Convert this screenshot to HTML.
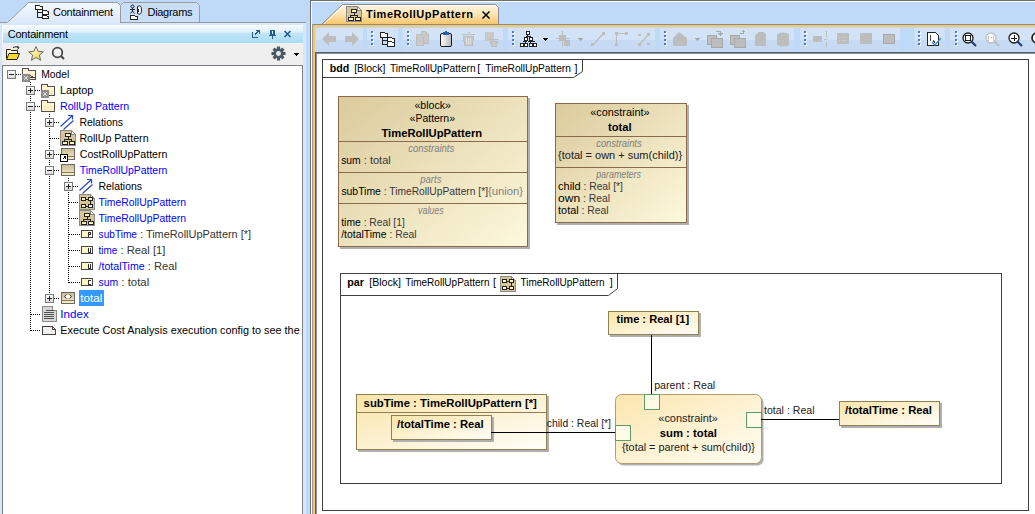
<!DOCTYPE html><html><head><meta charset="utf-8"><style>
html,body{margin:0;padding:0;width:1035px;height:514px;overflow:hidden;background:#bfdaf9}
svg{display:block}
text{font-family:"Liberation Sans",sans-serif;font-size:11px;white-space:pre}
</style></head><body>
<svg width="1035" height="514" viewBox="0 0 1035 514" shape-rendering="crispEdges">
<defs>
<linearGradient id="gTabC" x1="0" y1="0" x2="0" y2="1"><stop offset="0" stop-color="#f4f8fe"/><stop offset="1" stop-color="#dce9fa"/></linearGradient>
<linearGradient id="gTitle" x1="0" y1="0" x2="0" y2="1"><stop offset="0" stop-color="#f2f9fe"/><stop offset="0.36" stop-color="#dff1fb"/><stop offset="0.42" stop-color="#c2e5f7"/><stop offset="1" stop-color="#a9dbf3"/></linearGradient>
<linearGradient id="gTabE" x1="0" y1="0" x2="0" y2="1"><stop offset="0" stop-color="#fef6e4"/><stop offset="0.45" stop-color="#fde6b8"/><stop offset="1" stop-color="#f8c468"/></linearGradient>
<linearGradient id="gTb" x1="0" y1="0" x2="0" y2="1"><stop offset="0" stop-color="#d5e4f8"/><stop offset="0.5" stop-color="#cfdff6"/><stop offset="0.52" stop-color="#c3d7f2"/><stop offset="1" stop-color="#c6daf4"/></linearGradient>
<linearGradient id="gBlock" x1="0" y1="0" x2="1" y2="1"><stop offset="0" stop-color="#dbca9c"/><stop offset="1" stop-color="#fdf9dc"/></linearGradient>
<linearGradient id="gPart" x1="0" y1="0" x2="1" y2="1"><stop offset="0" stop-color="#f9e4a8"/><stop offset="1" stop-color="#fffefa"/></linearGradient>
<linearGradient id="gCons" x1="0" y1="0" x2="1" y2="1"><stop offset="0" stop-color="#fce6ae"/><stop offset="1" stop-color="#fffdf4"/></linearGradient>
<linearGradient id="gExp" x1="0" y1="0" x2="0" y2="1"><stop offset="0" stop-color="#ffffff"/><stop offset="1" stop-color="#d8d8d8"/></linearGradient>
<linearGradient id="gBlk" x1="0" y1="0" x2="0" y2="1"><stop offset="0" stop-color="#c8b890"/><stop offset="1" stop-color="#f8eed0"/></linearGradient>
<linearGradient id="gClip" x1="0" y1="0" x2="1" y2="0"><stop offset="0" stop-color="#ffffff"/><stop offset="1" stop-color="#b8b8b8"/></linearGradient>
<linearGradient id="gStar" x1="0" y1="0" x2="1" y2="1"><stop offset="0" stop-color="#fdfdd8"/><stop offset="0.6" stop-color="#f2e488"/><stop offset="1" stop-color="#e8c440"/></linearGradient>
</defs>

<path d="M7.5 22.5 L28.5 2.5 L117.5 2.5 L120.5 5.5 L120.5 22.5" fill="url(#gTabC)" stroke="#9a9a9a" shape-rendering="auto"/>
<path d="M120.5 22.5 L120.5 5.5 L123.5 2.5 L196.5 2.5 L199.5 5.5 L199.5 22.5" fill="#c9def9" stroke="#9a9a9a" shape-rendering="auto"/>
<line x1="0" y1="22.5" x2="7" y2="22.5" stroke="#9a9a9a"/>
<line x1="120" y1="22.5" x2="306" y2="22.5" stroke="#9a9a9a"/>
<rect x="0" y="23" width="306" height="491" fill="#d6e6fb"/>
<rect x="8" y="22" width="112" height="1" fill="#dce9fa"/>
<text x="53" y="15.5" fill="#000" textLength="60" lengthAdjust="spacing">Containment</text>
<text x="147.5" y="15.5" fill="#000" textLength="45" lengthAdjust="spacing">Diagrams</text>
<rect x="2" y="25" width="301" height="18" fill="#ffffff"/>
<rect x="3" y="26" width="300" height="17" fill="url(#gTitle)"/>
<text x="7.7" y="37.5" fill="#000" textLength="60.4" lengthAdjust="spacing">Containment</text>
<rect x="2" y="43" width="301" height="22" fill="#efefef"/>
<rect x="2" y="65" width="300" height="449" fill="#ffffff"/>
<path d="M6.5 49.5 H10.5 L11.5 50.5 H17.5 V58.5 H6.5 Z" fill="#fdf6c8" stroke="#222" shape-rendering="auto"/>
<path d="M6.5 59.5 L9 53.5 H19.5 L17 59.5 Z" fill="#f6dc2a" stroke="#222" shape-rendering="auto"/>
<path d="M13 47.5 Q16 46 18.5 47.5 M17 46 L19 47.5 L17.5 49.5" fill="none" stroke="#222" stroke-width="1" shape-rendering="auto"/>
<path d="M36 46.5 L38.2 51.3 L43.3 51.8 L39.4 55.1 L40.6 60.2 L36 57.5 L31.4 60.2 L32.6 55.1 L28.7 51.8 L33.8 51.3 Z" fill="url(#gStar)" stroke="#6c6c60" stroke-width="1" shape-rendering="auto"/>
<circle cx="57.5" cy="52.5" r="4.8" fill="none" stroke="#4a4a4a" stroke-width="1.8" shape-rendering="auto"/>
<path d="M61 56 L64 59" stroke="#4a4a4a" stroke-width="2.2" shape-rendering="auto"/>
<g transform="translate(278.5 53.5)" shape-rendering="auto"><rect x="-1.6" y="-7" width="3.2" height="4" fill="#4c5966" transform="rotate(0)"/><rect x="-1.6" y="-7" width="3.2" height="4" fill="#4c5966" transform="rotate(45)"/><rect x="-1.6" y="-7" width="3.2" height="4" fill="#4c5966" transform="rotate(90)"/><rect x="-1.6" y="-7" width="3.2" height="4" fill="#4c5966" transform="rotate(135)"/><rect x="-1.6" y="-7" width="3.2" height="4" fill="#4c5966" transform="rotate(180)"/><rect x="-1.6" y="-7" width="3.2" height="4" fill="#4c5966" transform="rotate(225)"/><rect x="-1.6" y="-7" width="3.2" height="4" fill="#4c5966" transform="rotate(270)"/><rect x="-1.6" y="-7" width="3.2" height="4" fill="#4c5966" transform="rotate(315)"/><circle r="5" fill="#4c5966"/><circle r="2.4" fill="#efefef"/></g>
<path d="M294 53 H299 L296.5 56 Z" fill="#000"/>
<path d="M252.5 32 V37.5 H258 M255 34.5 L259 30.5 M256 30.5 H259.5 V34" fill="none" stroke="#2a5a90" stroke-width="1.2"/>
<path d="M270 30.5 H275 M271 31 V35 H274 V31 M269 35.5 H276 M272.5 36 V38.5" fill="none" stroke="#2a5a90" stroke-width="1.2"/>
<path d="M284.5 31 L290.5 37 M290.5 31 L284.5 37" stroke="#2a5a90" stroke-width="1.6" shape-rendering="auto"/>
<path d="M35.5 5.5 H39.5 L40.5 6.5 H42.5 V9.5 H35.5 Z M42.5 10.5 H46.5 L47.5 11.5 H48.5 V14.5 H42.5 Z M42.5 15.5 H46.5 L47.5 16.5 H48.5 V18.5 H42.5 Z" fill="#fff" stroke="#222"/>
<path d="M37.5 10 V17.5 H42 M37.5 12.5 H42" fill="none" stroke="#222"/>
<circle cx="132.5" cy="6.5" r="1.5" fill="none" stroke="#222" shape-rendering="auto"/>
<path d="M132.5 8 V11 M130 9.5 H135 M130.5 13.5 L132.5 11 L134.5 13.5" fill="none" stroke="#222" shape-rendering="auto"/>
<path d="M137.5 6.5 Q141.5 4 141.5 10 Q141.5 16 137.5 13.5 Z" fill="#fff" stroke="#222" shape-rendering="auto"/>
<path d="M130.5 15.5 H134.5 L135.5 16.5 H137.5 V19.5 H130.5 Z" fill="#fff" stroke="#222"/>
<path d="M138.5 8.5 V11.5" stroke="#222"/>
<path d="M2.5 514 V65.5 H302.5 V514" fill="none" stroke="#7c7f86"/>
<rect x="7.5" y="70.5" width="8" height="8" fill="url(#gExp)" stroke="#7b7b7b"/>
<line x1="9" y1="74.5" x2="14" y2="74.5" stroke="#222"/>
<line x1="16" y1="74.5" x2="22" y2="74.5" stroke="#000" stroke-dasharray="1,1"/>
<path d="M22.5 79.5 V70.5 H35.5 V79.5 Z" fill="#fcf0c4" stroke="#505050"/>
<path d="M22.5 70.5 V68.5 H28.5 V70.5" fill="#fcf0c4" stroke="#505050"/>
<rect x="23" y="71" width="12" height="2" fill="#fff8e0"/>
<path d="M28 74 L33 77 H28" fill="none" stroke="#404040"/>
<rect x="22" y="74" width="8" height="8" fill="#8c8c8c"/>
<path d="M24 76 L28 80 M28 76 L24 80" stroke="#e8e8e8" shape-rendering="auto"/>
<text x="41.2" y="78" fill="#000" textLength="28" lengthAdjust="spacingAndGlyphs" >Model</text>
<line x1="30.5" y1="82" x2="30.5" y2="331" stroke="#000" stroke-dasharray="1,1"/>
<rect x="26.5" y="86.5" width="8" height="8" fill="url(#gExp)" stroke="#7b7b7b"/>
<line x1="28" y1="90.5" x2="33" y2="90.5" stroke="#222"/>
<line x1="30.5" y1="88" x2="30.5" y2="93" stroke="#222"/>
<line x1="35" y1="90.5" x2="41" y2="90.5" stroke="#000" stroke-dasharray="1,1"/>
<path d="M41.5 95.5 V86.5 H54.5 V95.5 Z" fill="#fcf0c4" stroke="#505050"/>
<path d="M41.5 86.5 V84.5 H47.5 V86.5" fill="#fcf0c4" stroke="#505050"/>
<rect x="42" y="87" width="12" height="2" fill="#fff8e0"/>
<rect x="41" y="90" width="8" height="8" fill="#8c8c8c"/>
<path d="M43 92 L47 96 M47 92 L43 96" stroke="#e8e8e8" shape-rendering="auto"/>
<text x="60" y="94" fill="#000" textLength="33.4" lengthAdjust="spacingAndGlyphs" >Laptop</text>
<rect x="26.5" y="102.5" width="8" height="8" fill="url(#gExp)" stroke="#7b7b7b"/>
<line x1="28" y1="106.5" x2="33" y2="106.5" stroke="#222"/>
<line x1="35" y1="106.5" x2="41" y2="106.5" stroke="#000" stroke-dasharray="1,1"/>
<path d="M41.5 111.5 V102.5 H54.5 V111.5 Z" fill="#fcf0c4" stroke="#505050"/>
<path d="M41.5 102.5 V100.5 H47.5 V102.5" fill="#fcf0c4" stroke="#505050"/>
<rect x="42" y="103" width="12" height="2" fill="#fff8e0"/>
<text x="60" y="110" fill="#0000ff" textLength="69.2" lengthAdjust="spacingAndGlyphs" >RollUp Pattern</text>
<line x1="49.5" y1="114" x2="49.5" y2="299" stroke="#000" stroke-dasharray="1,1"/>
<rect x="45.5" y="118.5" width="8" height="8" fill="url(#gExp)" stroke="#7b7b7b"/>
<line x1="47" y1="122.5" x2="52" y2="122.5" stroke="#222"/>
<line x1="49.5" y1="120" x2="49.5" y2="125" stroke="#222"/>
<line x1="54" y1="122.5" x2="60" y2="122.5" stroke="#000" stroke-dasharray="1,1"/>
<path d="M60.5 126.5 L72.5 115.5 M68 115.5 H72.5 V119.5 M63.5 129.5 L73.5 120.5" fill="none" stroke="#2848c8" stroke-width="1.2" shape-rendering="auto"/>
<text x="79.4" y="126" fill="#000" textLength="43.6" lengthAdjust="spacingAndGlyphs" >Relations</text>
<line x1="50" y1="138.5" x2="60" y2="138.5" stroke="#000" stroke-dasharray="1,1"/>
<path d="M60.5 130.5 H71.5 L75.5 134.5 V145.5 H60.5 Z" fill="#d6c597" stroke="#8a8a8a"/>
<path d="M71.5 130.5 V134.5 H75.5 Z" fill="#ffffff" stroke="#8a8a8a"/>
<rect x="65.5" y="133.5" width="5" height="3" fill="#fff6c8" stroke="#222"/>
<path d="M68 137 V139.5 H64.5 V141 M68 139.5 H71.5 V141" fill="none" stroke="#222"/>
<rect x="62.5" y="141.5" width="5" height="3" fill="#fff6c8" stroke="#222"/>
<rect x="69.5" y="141.5" width="5" height="3" fill="#fff6c8" stroke="#222"/>
<text x="79.4" y="142" fill="#000" textLength="69.2" lengthAdjust="spacingAndGlyphs" >RollUp Pattern</text>
<rect x="45.5" y="150.5" width="8" height="8" fill="url(#gExp)" stroke="#7b7b7b"/>
<line x1="47" y1="154.5" x2="52" y2="154.5" stroke="#222"/>
<line x1="49.5" y1="152" x2="49.5" y2="157" stroke="#222"/>
<line x1="54" y1="154.5" x2="60" y2="154.5" stroke="#000" stroke-dasharray="1,1"/>
<rect x="61.5" y="148.5" width="13" height="11" fill="url(#gBlk)" stroke="#6a6a6a"/>
<line x1="62" y1="156.5" x2="74" y2="156.5" stroke="#8c7c58"/>
<rect x="62" y="157" width="12" height="2" fill="#f4e8c0"/>
<rect x="60.5" y="154.5" width="7" height="7" fill="#fff" stroke="#000"/>
<path d="M62.5 159.5 L65.5 156.5 M63.5 156.5 H65.5 V158.5" stroke="#000" fill="none"/>
<text x="79.8" y="158" fill="#000" textLength="87.6" lengthAdjust="spacingAndGlyphs" >CostRollUpPattern</text>
<rect x="45.5" y="166.5" width="8" height="8" fill="url(#gExp)" stroke="#7b7b7b"/>
<line x1="47" y1="170.5" x2="52" y2="170.5" stroke="#222"/>
<line x1="54" y1="170.5" x2="60" y2="170.5" stroke="#000" stroke-dasharray="1,1"/>
<rect x="61.5" y="164.5" width="13" height="11" fill="url(#gBlk)" stroke="#6a6a6a"/>
<line x1="62" y1="172.5" x2="74" y2="172.5" stroke="#8c7c58"/>
<rect x="62" y="173" width="12" height="2" fill="#f4e8c0"/>
<text x="79.8" y="174" fill="#0000ff" textLength="87.6" lengthAdjust="spacingAndGlyphs" >TimeRollUpPattern</text>
<line x1="68.5" y1="178" x2="68.5" y2="283" stroke="#000" stroke-dasharray="1,1"/>
<rect x="64.5" y="182.5" width="8" height="8" fill="url(#gExp)" stroke="#7b7b7b"/>
<line x1="66" y1="186.5" x2="71" y2="186.5" stroke="#222"/>
<line x1="68.5" y1="184" x2="68.5" y2="189" stroke="#222"/>
<line x1="73" y1="186.5" x2="79" y2="186.5" stroke="#000" stroke-dasharray="1,1"/>
<path d="M79.5 190.5 L91.5 179.5 M87 179.5 H91.5 V183.5 M82.5 193.5 L92.5 184.5" fill="none" stroke="#2848c8" stroke-width="1.2" shape-rendering="auto"/>
<text x="98.5" y="190" fill="#000" textLength="43.5" lengthAdjust="spacingAndGlyphs" >Relations</text>
<line x1="69" y1="202.5" x2="79" y2="202.5" stroke="#000" stroke-dasharray="1,1"/>
<path d="M79.5 194.5 H90.5 L94.5 198.5 V209.5 H79.5 Z" fill="#d6c597" stroke="#8a8a8a"/>
<path d="M90.5 194.5 V198.5 H94.5 Z" fill="#ffffff" stroke="#8a8a8a"/>
<rect x="81.5" y="197.5" width="4" height="3" fill="#fff6c8" stroke="#222"/>
<rect x="88.5" y="197.5" width="4" height="3" fill="#fff6c8" stroke="#222"/>
<rect x="81.5" y="204.5" width="4" height="3" fill="#fff6c8" stroke="#222"/>
<rect x="88.5" y="204.5" width="4" height="3" fill="#fff6c8" stroke="#222"/>
<path d="M86 199.5 H88 M86 206.5 H88 M90.5 201 V204" stroke="#222"/>
<text x="98.5" y="206" fill="#0000ff" textLength="87.5" lengthAdjust="spacingAndGlyphs" >TimeRollUpPattern</text>
<line x1="69" y1="218.5" x2="79" y2="218.5" stroke="#000" stroke-dasharray="1,1"/>
<path d="M79.5 210.5 H90.5 L94.5 214.5 V225.5 H79.5 Z" fill="#d6c597" stroke="#8a8a8a"/>
<path d="M90.5 210.5 V214.5 H94.5 Z" fill="#ffffff" stroke="#8a8a8a"/>
<rect x="84.5" y="213.5" width="5" height="3" fill="#fff6c8" stroke="#222"/>
<path d="M87 217 V219.5 H83.5 V221 M87 219.5 H90.5 V221" fill="none" stroke="#222"/>
<rect x="81.5" y="221.5" width="5" height="3" fill="#fff6c8" stroke="#222"/>
<rect x="88.5" y="221.5" width="5" height="3" fill="#fff6c8" stroke="#222"/>
<text x="98.5" y="222" fill="#0000ff" textLength="87.5" lengthAdjust="spacingAndGlyphs" >TimeRollUpPattern</text>
<line x1="69" y1="234.5" x2="80" y2="234.5" stroke="#000" stroke-dasharray="1,1"/>
<rect x="81.5" y="230.5" width="11" height="7" fill="#fcf6c4" stroke="#454545"/>
<rect x="88" y="231" width="4" height="6" fill="#fffde8"/>
<path d="M88.5 237 V232.5 H90.5 V234.5 H89" fill="none" stroke="#333"/>
<text x="98.6" y="238" fill="#0000ff" textLength="38.4" lengthAdjust="spacingAndGlyphs" >subTime</text>
<text x="137" y="238" fill="#333333" textLength="114" lengthAdjust="spacingAndGlyphs" > : TimeRollUpPattern [*]</text>
<line x1="69" y1="250.5" x2="80" y2="250.5" stroke="#000" stroke-dasharray="1,1"/>
<rect x="81.5" y="246.5" width="11" height="7" fill="#fcf6c4" stroke="#454545"/>
<rect x="88" y="247" width="4" height="6" fill="#fffde8"/>
<path d="M88.5 248 V252.5 H90.5 V248" fill="none" stroke="#333"/>
<text x="98.6" y="254" fill="#0000ff" textLength="18.7" lengthAdjust="spacingAndGlyphs" >time</text>
<text x="117.4" y="254" fill="#333333" textLength="48" lengthAdjust="spacingAndGlyphs" > : Real [1]</text>
<line x1="69" y1="266.5" x2="80" y2="266.5" stroke="#000" stroke-dasharray="1,1"/>
<rect x="81.5" y="262.5" width="11" height="7" fill="#fcf6c4" stroke="#454545"/>
<rect x="88" y="263" width="4" height="6" fill="#fffde8"/>
<path d="M88.5 264 V268.5 H90.5 V264" fill="none" stroke="#333"/>
<text x="98.6" y="270" fill="#0000ff" textLength="46" lengthAdjust="spacingAndGlyphs" >/totalTime</text>
<text x="144.6" y="270" fill="#333333" textLength="32.4" lengthAdjust="spacingAndGlyphs" > : Real</text>
<line x1="69" y1="282.5" x2="80" y2="282.5" stroke="#000" stroke-dasharray="1,1"/>
<rect x="81.5" y="278.5" width="11" height="7" fill="#fcf6c4" stroke="#454545"/>
<rect x="88" y="279" width="4" height="6" fill="#fffde8"/>
<path d="M91 280.5 H88.5 V284.5 H91" fill="none" stroke="#333"/>
<text x="98.6" y="286" fill="#0000ff" textLength="19.6" lengthAdjust="spacingAndGlyphs" >sum</text>
<text x="118.2" y="286" fill="#333333" textLength="31" lengthAdjust="spacingAndGlyphs" > : total</text>
<rect x="45.5" y="294.5" width="8" height="8" fill="url(#gExp)" stroke="#7b7b7b"/>
<line x1="47" y1="298.5" x2="52" y2="298.5" stroke="#222"/>
<line x1="49.5" y1="296" x2="49.5" y2="301" stroke="#222"/>
<line x1="54" y1="298.5" x2="60" y2="298.5" stroke="#000" stroke-dasharray="1,1"/>
<rect x="61.5" y="292.5" width="13" height="11" fill="url(#gBlk)" stroke="#6a6a6a"/>
<line x1="62" y1="300.5" x2="74" y2="300.5" stroke="#8c7c58"/>
<rect x="62" y="301" width="12" height="2" fill="#f4e8c0"/>
<path d="M66.5 294.5 L64.5 296.5 L66.5 298.5 M69.5 294.5 L71.5 296.5 L69.5 298.5" fill="none" stroke="#333" shape-rendering="auto"/>
<rect x="66" y="295" width="4" height="3" fill="#ffffff"/>
<rect x="79" y="290" width="25" height="16" fill="#3399ff"/>
<text x="80.3" y="302" fill="#ffffff" textLength="22" lengthAdjust="spacingAndGlyphs" >total</text>
<line x1="31" y1="314.5" x2="41" y2="314.5" stroke="#000" stroke-dasharray="1,1"/>
<path d="M42.5 306.5 H52.5 L56.5 310.5 V321.5 H42.5 Z" fill="#d8d8d8" stroke="#8a8a8a"/>
<path d="M52.5 306.5 V310.5 H56.5" fill="#fff" stroke="#8a8a8a"/>
<line x1="46" y1="310.5" x2="54" y2="310.5" stroke="#505050"/>
<line x1="44" y1="312.5" x2="54" y2="312.5" stroke="#505050"/>
<line x1="44" y1="314.5" x2="54" y2="314.5" stroke="#505050"/>
<line x1="44" y1="316.5" x2="54" y2="316.5" stroke="#505050"/>
<line x1="44" y1="318.5" x2="54" y2="318.5" stroke="#505050"/>
<text x="60.3" y="318" fill="#0000ff" textLength="28.4" lengthAdjust="spacingAndGlyphs" >Index</text>
<line x1="31" y1="330.5" x2="41" y2="330.5" stroke="#000" stroke-dasharray="1,1"/>
<path d="M42.5 326.5 H52.5 L55.5 329.5 V334.5 H42.5 Z" fill="#f0f0f0" stroke="#404040"/>
<path d="M52.5 326.5 V329.5 H55.5" fill="none" stroke="#404040"/>
<text x="60.3" y="334" fill="#000" textLength="239.4" lengthAdjust="spacingAndGlyphs" >Execute Cost Analysis execution config to see the</text>
<rect x="310" y="0" width="725" height="514" fill="#bfdaf9"/>
<line x1="310.5" y1="0" x2="310.5" y2="514" stroke="#6d6d6d"/>
<line x1="310" y1="0.5" x2="1035" y2="0.5" stroke="#6d6d6d"/>
<line x1="311.5" y1="1" x2="311.5" y2="514" stroke="#ffffff"/>
<line x1="311" y1="1.5" x2="1035" y2="1.5" stroke="#ffffff"/>
<path d="M321.5 24.5 L342.5 4.5 L495.5 4.5 L498.5 7.5 L498.5 24.5" fill="url(#gTabE)" stroke="#8c8c8c" shape-rendering="auto"/>
<path d="M324 24 L343 5.5 L495 5.5" fill="none" stroke="#ffffff" stroke-opacity="0.8" shape-rendering="auto"/>
<text x="366" y="18" fill="#000" font-weight="bold" font-size="12" textLength="107" lengthAdjust="spacing">TimeRollUpPattern</text>
<path d="M346.5 6.5 H357.5 L361.5 10.5 V21.5 H346.5 Z" fill="#d6c597" stroke="#8a8a8a"/>
<path d="M357.5 6.5 V10.5 H361.5 Z" fill="#ffffff" stroke="#8a8a8a"/>
<rect x="351.5" y="9.5" width="5" height="3" fill="#fff6c8" stroke="#222"/>
<path d="M354 13 V15.5 H350.5 V17 M354 15.5 H357.5 V17" fill="none" stroke="#222"/>
<rect x="348.5" y="17.5" width="5" height="3" fill="#fff6c8" stroke="#222"/>
<rect x="355.5" y="17.5" width="5" height="3" fill="#fff6c8" stroke="#222"/>
<path d="M482.5 11.5 L489.5 18.5 M489.5 11.5 L482.5 18.5" stroke="#000" stroke-width="1.5" shape-rendering="auto"/>
<rect x="312" y="24" width="723" height="1" fill="#8a8a8a"/>
<rect x="312" y="24" width="1" height="490" fill="#9a9a9a"/>
<rect x="313" y="25" width="722" height="2" fill="#f8c868"/>
<rect x="313" y="25" width="2" height="489" fill="#f8c868"/>
<rect x="315" y="27" width="720" height="25" fill="#bfdaf9"/>
<rect x="316" y="28" width="47" height="12" fill="#d3e3f7"/>
<rect x="316" y="40" width="47" height="11" fill="#c6daf3"/>
<rect x="367" y="28" width="31" height="12" fill="#d3e3f7"/>
<rect x="367" y="40" width="31" height="11" fill="#c6daf3"/>
<rect x="403" y="28" width="100" height="12" fill="#d3e3f7"/>
<rect x="403" y="40" width="100" height="11" fill="#c6daf3"/>
<rect x="508" y="28" width="147" height="12" fill="#d3e3f7"/>
<rect x="508" y="40" width="147" height="11" fill="#c6daf3"/>
<rect x="660" y="28" width="134" height="12" fill="#d3e3f7"/>
<rect x="660" y="40" width="134" height="11" fill="#c6daf3"/>
<rect x="800" y="28" width="100" height="12" fill="#d3e3f7"/>
<rect x="800" y="40" width="100" height="11" fill="#c6daf3"/>
<rect x="914" y="28" width="31" height="12" fill="#d3e3f7"/>
<rect x="914" y="40" width="31" height="11" fill="#c6daf3"/>
<rect x="950" y="28" width="85" height="12" fill="#d3e3f7"/>
<rect x="950" y="40" width="85" height="11" fill="#c6daf3"/>
<rect x="372" y="32" width="2" height="2" fill="#ffffff"/>
<rect x="371" y="31" width="2" height="2" fill="#3f7fd6"/>
<rect x="372" y="36" width="2" height="2" fill="#ffffff"/>
<rect x="371" y="35" width="2" height="2" fill="#3f7fd6"/>
<rect x="372" y="40" width="2" height="2" fill="#ffffff"/>
<rect x="371" y="39" width="2" height="2" fill="#3f7fd6"/>
<rect x="372" y="44" width="2" height="2" fill="#ffffff"/>
<rect x="371" y="43" width="2" height="2" fill="#3f7fd6"/>
<rect x="408" y="32" width="2" height="2" fill="#ffffff"/>
<rect x="407" y="31" width="2" height="2" fill="#3f7fd6"/>
<rect x="408" y="36" width="2" height="2" fill="#ffffff"/>
<rect x="407" y="35" width="2" height="2" fill="#3f7fd6"/>
<rect x="408" y="40" width="2" height="2" fill="#ffffff"/>
<rect x="407" y="39" width="2" height="2" fill="#3f7fd6"/>
<rect x="408" y="44" width="2" height="2" fill="#ffffff"/>
<rect x="407" y="43" width="2" height="2" fill="#3f7fd6"/>
<rect x="513" y="32" width="2" height="2" fill="#ffffff"/>
<rect x="512" y="31" width="2" height="2" fill="#3f7fd6"/>
<rect x="513" y="36" width="2" height="2" fill="#ffffff"/>
<rect x="512" y="35" width="2" height="2" fill="#3f7fd6"/>
<rect x="513" y="40" width="2" height="2" fill="#ffffff"/>
<rect x="512" y="39" width="2" height="2" fill="#3f7fd6"/>
<rect x="513" y="44" width="2" height="2" fill="#ffffff"/>
<rect x="512" y="43" width="2" height="2" fill="#3f7fd6"/>
<rect x="665" y="32" width="2" height="2" fill="#ffffff"/>
<rect x="664" y="31" width="2" height="2" fill="#3f7fd6"/>
<rect x="665" y="36" width="2" height="2" fill="#ffffff"/>
<rect x="664" y="35" width="2" height="2" fill="#3f7fd6"/>
<rect x="665" y="40" width="2" height="2" fill="#ffffff"/>
<rect x="664" y="39" width="2" height="2" fill="#3f7fd6"/>
<rect x="665" y="44" width="2" height="2" fill="#ffffff"/>
<rect x="664" y="43" width="2" height="2" fill="#3f7fd6"/>
<rect x="805" y="32" width="2" height="2" fill="#ffffff"/>
<rect x="804" y="31" width="2" height="2" fill="#3f7fd6"/>
<rect x="805" y="36" width="2" height="2" fill="#ffffff"/>
<rect x="804" y="35" width="2" height="2" fill="#3f7fd6"/>
<rect x="805" y="40" width="2" height="2" fill="#ffffff"/>
<rect x="804" y="39" width="2" height="2" fill="#3f7fd6"/>
<rect x="805" y="44" width="2" height="2" fill="#ffffff"/>
<rect x="804" y="43" width="2" height="2" fill="#3f7fd6"/>
<rect x="919" y="32" width="2" height="2" fill="#ffffff"/>
<rect x="918" y="31" width="2" height="2" fill="#3f7fd6"/>
<rect x="919" y="36" width="2" height="2" fill="#ffffff"/>
<rect x="918" y="35" width="2" height="2" fill="#3f7fd6"/>
<rect x="919" y="40" width="2" height="2" fill="#ffffff"/>
<rect x="918" y="39" width="2" height="2" fill="#3f7fd6"/>
<rect x="919" y="44" width="2" height="2" fill="#ffffff"/>
<rect x="918" y="43" width="2" height="2" fill="#3f7fd6"/>
<rect x="956" y="32" width="2" height="2" fill="#ffffff"/>
<rect x="955" y="31" width="2" height="2" fill="#3f7fd6"/>
<rect x="956" y="36" width="2" height="2" fill="#ffffff"/>
<rect x="955" y="35" width="2" height="2" fill="#3f7fd6"/>
<rect x="956" y="40" width="2" height="2" fill="#ffffff"/>
<rect x="955" y="39" width="2" height="2" fill="#3f7fd6"/>
<rect x="956" y="44" width="2" height="2" fill="#ffffff"/>
<rect x="955" y="43" width="2" height="2" fill="#3f7fd6"/>
<path d="M322 39 L329 32 L329 36 L336 36 L336 42 L329 42 L329 46 Z" fill="#bdbdbd" shape-rendering="auto"/>
<path d="M359 39 L352 32 L352 36 L345 36 L345 42 L352 42 L352 46 Z" fill="#bdbdbd" shape-rendering="auto"/>
<path d="M382.5 37 V44.5 H387 M382.5 40.5 H387" fill="none" stroke="#222"/>
<path d="M380.5 37.5 V32.5 H384.5 L385.5 33.5 H387.5 V37.5 Z" fill="#fff" stroke="#222"/>
<path d="M387.5 42.5 V37.5 H391.5 L392.5 38.5 H394.5 V42.5 Z" fill="#fff" stroke="#222"/>
<path d="M387.5 46.5 V41.5 H391.5 L392.5 42.5 H394.5 V46.5 Z" fill="#fff" stroke="#222"/>
<path d="M416.5 34.5 H421.5 L423.5 36.5 V45.5 H416.5 Z M420.5 31.5 H425.5 L428.5 34.5 V43.5 H423.5" fill="#c8c8c8" stroke="#bdbdbd"/>
<rect x="440.5" y="33.5" width="11" height="13" rx="1.5" fill="url(#gClip)" stroke="#1a1a1a" shape-rendering="auto"/>
<rect x="443" y="32" width="6" height="3" fill="#2a5fb0"/>
<rect x="445" y="31" width="2" height="1" fill="#2a5fb0"/>
<path d="M462 34.5 H475 M467.5 32.5 H469.5 M463.5 36.5 H473.5 L472.5 45.5 H464.5 Z" fill="#c8c8c8" stroke="#bdbdbd"/>
<path d="M466.5 38 V44 M468.5 38 V44 M470.5 38 V44" stroke="#e0e0e0"/>
<rect x="485" y="32" width="9" height="9" fill="#c8c8c8"/>
<path d="M489 39.5 H499 M490.5 41.5 H497.5 L496.5 46.5 H491.5 Z" fill="#c8c8c8" stroke="#bdbdbd"/>
<path d="M527.5 34 V36.5 M525.5 36.5 H530.5 M525.5 36.5 V38 M530.5 36.5 V38 M525.5 40 V41.5 M530.5 40 V41.5 M522.5 41.5 H527 M528 41.5 H534.5 M521.5 42.5 V44 M525.5 41.5 V44 M530.5 41.5 V44 M534.5 42.5 V44" stroke="#222" fill="none"/>
<rect x="526.5" y="31.5" width="3" height="3" fill="#fff" stroke="#222"/>
<rect x="524.5" y="37.5" width="3" height="3" fill="#fff" stroke="#222"/>
<rect x="529.5" y="37.5" width="3" height="3" fill="#fff" stroke="#222"/>
<rect x="520.5" y="43.5" width="3" height="3" fill="#fff" stroke="#222"/>
<rect x="524.5" y="43.5" width="3" height="3" fill="#fff" stroke="#222"/>
<rect x="529.5" y="43.5" width="3" height="3" fill="#fff" stroke="#222"/>
<rect x="533.5" y="43.5" width="3" height="3" fill="#fff" stroke="#222"/>
<path d="M543 38 H548 L545.5 41 Z" fill="#000"/>
<rect x="559" y="35" width="7" height="6" fill="#bdbdbd"/><rect x="564" y="40" width="6" height="6" fill="#bdbdbd"/>
<path d="M562.5 31 V47 M556 38.5 H570" stroke="#bdbdbd"/>
<path d="M578 38 H583 L580.5 41 Z" fill="#a8a8a8"/>
<path d="M593 45 L603 34" stroke="#bdbdbd" stroke-width="1.3" shape-rendering="auto"/><rect x="591" y="43" width="3" height="3" fill="#bdbdbd"/><rect x="602" y="32" width="3" height="3" fill="#bdbdbd"/>
<path d="M616.5 34 V45 M616 33.5 H626" stroke="#bdbdbd"/><rect x="615" y="32" width="3" height="3" fill="#bdbdbd"/><rect x="625" y="32" width="3" height="3" fill="#bdbdbd"/><rect x="615" y="43" width="3" height="3" fill="#bdbdbd"/>
<path d="M640 44 L648 35" stroke="#bdbdbd" stroke-width="1.3" shape-rendering="auto"/><rect x="638" y="34" width="3" height="2" fill="#bdbdbd"/><rect x="647" y="33" width="3" height="3" fill="#bdbdbd"/><rect x="638" y="43" width="3" height="3" fill="#bdbdbd"/><rect x="647" y="43" width="3" height="2" fill="#bdbdbd"/>
<path d="M673 38 L679 32 L687 38 L687 46 L673 46 Z" fill="#bdbdbd" shape-rendering="auto"/>
<path d="M695 38 H700 L697.5 41 Z" fill="#a8a8a8"/>
<rect x="707" y="35" width="9" height="9" fill="#bdbdbd" stroke="#a8a8a8"/><rect x="711" y="38" width="11" height="9" fill="#bdbdbd" stroke="#a8a8a8"/>
<path d="M716 31.5 H720.5 V35 M718.5 33 L720.5 35 L722.5 33" fill="none" stroke="#a8a8a8"/>
<rect x="730" y="35" width="9" height="9" fill="#bdbdbd" stroke="#a8a8a8"/><rect x="734" y="38" width="11" height="9" fill="#bdbdbd" stroke="#a8a8a8"/>
<path d="M740 33.5 H743.5 V30.5 M741.5 32.5 L743.5 30.5 L745.5 32.5" fill="none" stroke="#a8a8a8"/>
<path d="M755 35 L758 32 H763 L766 35 V46 H755 Z" fill="#bdbdbd"/>
<path d="M777 34 Q783 31 789 34 V45 Q783 48 777 45 Z" fill="#bdbdbd" shape-rendering="auto"/>
<rect x="813" y="36" width="9" height="6" fill="#bdbdbd"/><path d="M824 39.5 H827 M826.5 31 V37 M826.5 42 V47" stroke="#bdbdbd"/>
<rect x="837" y="33" width="12" height="11" fill="#bdbdbd"/><path d="M839 37.5 H847 M839 40.5 H847" stroke="#d0d0d0" stroke-dasharray="1,1"/>
<rect x="860" y="33" width="12" height="11" fill="#bdbdbd"/>
<rect x="883.5" y="34.5" width="11" height="9" fill="#bdbdbd" stroke="#a8a8a8"/>
<path d="M927.5 32.5 H935.5 L938.5 35.5 V45.5 H927.5 Z" fill="#fff" stroke="#222"/>
<path d="M932 42 L935 45 L941 38" fill="none" stroke="#4a8ad8" stroke-width="1.5" shape-rendering="auto"/>
<path d="M930.5 35 V41 M933 40.5 L935 42.5" stroke="#444" fill="none"/>
<circle cx="968" cy="38" r="5" fill="#fff" stroke="#1a1a1a" stroke-width="1.3" shape-rendering="auto"/>
<path d="M971.5 41.5 L976 46" stroke="#2a3a78" stroke-width="2.2" shape-rendering="auto"/>
<rect x="965.5" y="35.5" width="5" height="5" fill="none" stroke="#1a1a1a"/>
<circle cx="991" cy="38" r="5" fill="#fff" stroke="#bdbdbd" stroke-width="1.3" shape-rendering="auto"/>
<path d="M994.5 41.5 L999 46" stroke="#bdbdbd" stroke-width="2.2" shape-rendering="auto"/>
<path d="M988.5 36 V41 M993.5 36 V41 M991 37 V37.5 M991 39.5 V40" stroke="#bdbdbd"/>
<circle cx="1014" cy="38" r="5" fill="#fff" stroke="#1a1a1a" stroke-width="1.3" shape-rendering="auto"/>
<path d="M1017.5 41.5 L1022 46" stroke="#2a3a78" stroke-width="2.2" shape-rendering="auto"/>
<path d="M1011 38.5 H1017 M1014.5 35 V41" stroke="#1a1a1a" stroke-width="1.2"/>
<circle cx="1037" cy="38" r="5" fill="#fff" stroke="#1a1a1a" stroke-width="1.6" shape-rendering="auto"/>
<rect x="315" y="52" width="720" height="462" fill="#ffffff"/>
<rect x="315" y="52" width="720" height="1" fill="#5a6068"/>
<rect x="316" y="53" width="719" height="1" fill="#8a9098"/>
<rect x="315" y="52" width="1" height="462" fill="#5a6068"/>
<rect x="316" y="53" width="1" height="461" fill="#8a9098"/>
<rect x="322.5" y="59.5" width="706" height="451" fill="none" stroke="#404040"/>
<rect x="340" y="98" width="190" height="151" fill="#b0b0b0"/>
<rect x="338.5" y="96.5" width="189" height="150" fill="url(#gBlock)" stroke="#8a6a4a"/>
<line x1="338" y1="141.5" x2="528" y2="141.5" stroke="#8a6a4a"/>
<line x1="338" y1="172.5" x2="528" y2="172.5" stroke="#8a6a4a"/>
<line x1="338" y1="203.5" x2="528" y2="203.5" stroke="#8a6a4a"/>
<text x="414.4" y="109" fill="#000" textLength="36.6" lengthAdjust="spacingAndGlyphs" >«block»</text>
<text x="409.6" y="121.5" fill="#000" textLength="45.4" lengthAdjust="spacingAndGlyphs" >«Pattern»</text>
<text x="381.4" y="136.5" fill="#000" textLength="100.8" lengthAdjust="spacingAndGlyphs" font-weight="bold" >TimeRollUpPattern</text>
<text x="408.3" y="151.5" fill="#808080" textLength="45.9" lengthAdjust="spacingAndGlyphs" font-style="italic" >constraints</text>
<text x="341.2" y="164" fill="#000" textLength="19.5" lengthAdjust="spacingAndGlyphs" >sum</text>
<text x="360.7" y="164" fill="#383838" textLength="30.1" lengthAdjust="spacingAndGlyphs" > : total</text>
<text x="420.3" y="182.6" fill="#808080" textLength="21.1" lengthAdjust="spacingAndGlyphs" font-style="italic" >parts</text>
<text x="341.4" y="195" fill="#000" textLength="39.5" lengthAdjust="spacingAndGlyphs" >subTime</text>
<text x="380.9" y="195" fill="#383838" textLength="107.1" lengthAdjust="spacingAndGlyphs" > : TimeRollUpPattern [*]</text>
<text x="488" y="195" fill="#808080" textLength="35" lengthAdjust="spacingAndGlyphs" >{union}</text>
<text x="418" y="213.6" fill="#808080" textLength="25.7" lengthAdjust="spacingAndGlyphs" font-style="italic" >values</text>
<text x="341.2" y="225.8" fill="#000" textLength="19.6" lengthAdjust="spacingAndGlyphs" >time</text>
<text x="360.8" y="225.8" fill="#383838" textLength="44" lengthAdjust="spacingAndGlyphs" > : Real [1]</text>
<text x="341.2" y="237.5" fill="#000" textLength="45.3" lengthAdjust="spacingAndGlyphs" >/totalTime</text>
<text x="386.5" y="237.5" fill="#383838" textLength="30" lengthAdjust="spacingAndGlyphs" > : Real</text>
<rect x="557" y="105" width="132" height="120" fill="#b0b0b0"/>
<rect x="555.5" y="103.5" width="131" height="119" fill="url(#gBlock)" stroke="#8a6a4a"/>
<line x1="555" y1="136.5" x2="687" y2="136.5" stroke="#8a6a4a"/>
<line x1="555" y1="167.5" x2="687" y2="167.5" stroke="#8a6a4a"/>
<text x="590.2" y="115.5" fill="#000" textLength="59.4" lengthAdjust="spacingAndGlyphs" >«constraint»</text>
<text x="608" y="131" fill="#000" textLength="23.7" lengthAdjust="spacingAndGlyphs" font-weight="bold" >total</text>
<text x="596.2" y="147.2" fill="#808080" textLength="45.5" lengthAdjust="spacingAndGlyphs" font-style="italic" >constraints</text>
<text x="558.1" y="159.2" fill="#202020" textLength="124" lengthAdjust="spacingAndGlyphs" >{total = own + sum(child)}</text>
<text x="596.2" y="178" fill="#808080" textLength="44.7" lengthAdjust="spacingAndGlyphs" font-style="italic" >parameters</text>
<text x="558.1" y="190.1" fill="#000" textLength="22.5" lengthAdjust="spacingAndGlyphs" >child</text>
<text x="580.6" y="190.1" fill="#383838" textLength="42.4" lengthAdjust="spacingAndGlyphs" > : Real [*]</text>
<text x="558.1" y="201.9" fill="#000" textLength="22" lengthAdjust="spacingAndGlyphs" >own</text>
<text x="580.1" y="201.9" fill="#383838" textLength="30" lengthAdjust="spacingAndGlyphs" > : Real</text>
<text x="558.1" y="213.7" fill="#000" textLength="20.5" lengthAdjust="spacingAndGlyphs" >total</text>
<text x="578.6" y="213.7" fill="#383838" textLength="30" lengthAdjust="spacingAndGlyphs" > : Real</text>
<path d="M322.5 77.5 L573.5 77.5 L582.5 71.5 L582.5 59.5" fill="none" stroke="#404040" shape-rendering="auto"/>
<text x="329.7" y="72" fill="#000" textLength="19.5" lengthAdjust="spacingAndGlyphs" font-weight="bold" >bdd</text>
<text x="354.2" y="72" fill="#000" textLength="31.1" lengthAdjust="spacingAndGlyphs" >[Block]</text>
<text x="390" y="72" fill="#000" textLength="85.6" lengthAdjust="spacingAndGlyphs" >TimeRollUpPattern</text>
<text x="477.3" y="72" fill="#000" textLength="3" lengthAdjust="spacingAndGlyphs" >[</text>
<text x="485.3" y="72" fill="#000" textLength="85.6" lengthAdjust="spacingAndGlyphs" >TimeRollUpPattern</text>
<text x="574.6" y="72" fill="#000" textLength="3" lengthAdjust="spacingAndGlyphs" >]</text>
<rect x="340.5" y="273.5" width="661" height="210" fill="none" stroke="#404040"/>
<path d="M340.5 295.5 L608.5 295.5 L617.5 288.5 L617.5 273.5" fill="none" stroke="#404040" shape-rendering="auto"/>
<text x="347.3" y="286.2" fill="#000" textLength="16.7" lengthAdjust="spacingAndGlyphs" font-weight="bold" >par</text>
<text x="369.2" y="286.2" fill="#000" textLength="31.8" lengthAdjust="spacingAndGlyphs" >[Block]</text>
<text x="405.2" y="286.2" fill="#000" textLength="84.3" lengthAdjust="spacingAndGlyphs" >TimeRollUpPattern</text>
<text x="493" y="286.2" fill="#000" textLength="3" lengthAdjust="spacingAndGlyphs" >[</text>
<text x="520.5" y="286.2" fill="#000" textLength="84.1" lengthAdjust="spacingAndGlyphs" >TimeRollUpPattern</text>
<text x="609.8" y="286.2" fill="#000" textLength="3" lengthAdjust="spacingAndGlyphs" >]</text>
<path d="M500.5 276.5 H511.5 L515.5 280.5 V291.5 H500.5 Z" fill="#d6c597" stroke="#8a8a8a"/>
<path d="M511.5 276.5 V280.5 H515.5 Z" fill="#ffffff" stroke="#8a8a8a"/>
<rect x="502.5" y="279.5" width="4" height="3" fill="#fff6c8" stroke="#222"/>
<rect x="509.5" y="279.5" width="4" height="3" fill="#fff6c8" stroke="#222"/>
<rect x="502.5" y="286.5" width="4" height="3" fill="#fff6c8" stroke="#222"/>
<rect x="509.5" y="286.5" width="4" height="3" fill="#fff6c8" stroke="#222"/>
<path d="M507 281.5 H509 M507 288.5 H509 M511.5 283 V286" stroke="#222"/>
<rect x="358" y="396" width="191" height="56" fill="#b0b0b0"/>
<rect x="356.5" y="394.5" width="190" height="55" fill="url(#gPart)" stroke="#908050"/>
<line x1="356" y1="412.5" x2="547" y2="412.5" stroke="#908050"/>
<text x="363.6" y="406.6" fill="#000" textLength="173.3" lengthAdjust="spacingAndGlyphs" font-weight="bold" >subTime : TimeRollUpPattern [*]</text>
<rect x="393" y="417" width="101" height="25" fill="#b0b0b0"/>
<rect x="391.5" y="415.5" width="100" height="24" fill="url(#gPart)" stroke="#908050"/>
<text x="397.1" y="427.6" fill="#000" textLength="86.5" lengthAdjust="spacingAndGlyphs" font-weight="bold" >/totalTime : Real</text>
<rect x="610" y="313" width="91" height="24" fill="#b0b0b0"/>
<rect x="608.5" y="311.5" width="90" height="23" fill="url(#gPart)" stroke="#908050"/>
<text x="616.5" y="323" fill="#000" textLength="72.7" lengthAdjust="spacingAndGlyphs" font-weight="bold" >time : Real [1]</text>
<rect x="617.5" y="396.5" width="146" height="69" rx="6" fill="#b0b0b0" shape-rendering="auto"/>
<rect x="615.5" y="394.5" width="146" height="69" rx="6" fill="url(#gCons)" stroke="#b09c70" shape-rendering="auto"/>
<text x="658.3" y="422.3" fill="#202020" textLength="59.6" lengthAdjust="spacingAndGlyphs" >«constraint»</text>
<text x="659.7" y="437.2" fill="#000" textLength="57.2" lengthAdjust="spacingAndGlyphs" font-weight="bold" >sum : total</text>
<text x="622" y="451" fill="#202020" textLength="132.9" lengthAdjust="spacingAndGlyphs" >{total = parent + sum(child)}</text>
<rect x="644.5" y="394.5" width="15" height="15" fill="#fffbe4" stroke="#5c9c68"/>
<rect x="615.5" y="425.5" width="15" height="15" fill="#fffbe4" stroke="#5c9c68"/>
<rect x="746.5" y="412.5" width="15" height="15" fill="#fffbe4" stroke="#5c9c68"/>
<rect x="841" y="403" width="101" height="25" fill="#b0b0b0"/>
<rect x="839.5" y="401.5" width="100" height="24" fill="url(#gPart)" stroke="#908050"/>
<text x="845" y="413.6" fill="#000" textLength="87" lengthAdjust="spacingAndGlyphs" font-weight="bold" >/totalTime : Real</text>
<line x1="651.5" y1="335" x2="651.5" y2="394" stroke="#000"/>
<line x1="491" y1="432.5" x2="615" y2="432.5" stroke="#000"/>
<line x1="761" y1="419.5" x2="839" y2="419.5" stroke="#000"/>
<text x="654.2" y="389.3" fill="#202020" textLength="61" lengthAdjust="spacingAndGlyphs" >parent : Real</text>
<text x="546.8" y="426.6" fill="#202020" textLength="64.2" lengthAdjust="spacingAndGlyphs" >child : Real [*]</text>
<text x="764" y="414.2" fill="#202020" textLength="50.5" lengthAdjust="spacingAndGlyphs" >total : Real</text>
</svg></body></html>
